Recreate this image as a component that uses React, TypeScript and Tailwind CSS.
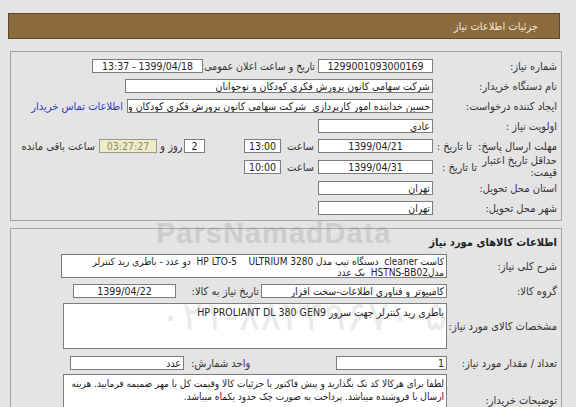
import React from "react";

function Field({
  w,
  h = "h-[14px]",
  align = "text-right",
  children,
  extra = "",
}: {
  w: string;
  h?: string;
  align?: string;
  children?: React.ReactNode;
  extra?: string;
}) {
  return (
    <div
      className={`${w} ${h} ${align} ${extra} shrink-0 overflow-hidden whitespace-nowrap border border-[#7c7c7c] bg-white px-[2px] text-[10.5px] leading-[12px] text-[#222]`}
    >
      {children}
    </div>
  );
}

export default function App() {
  return (
    <div
      dir="rtl"
      className="relative h-[407px] w-[576px] overflow-hidden bg-[#e4e4e4] font-['DejaVu_Sans_Condensed','DejaVu_Sans',sans-serif] text-[11px] leading-none text-[#333]"
    >
      <div className="pt-[13px]">
        {/* header */}
        <div className="mr-[16px] ml-[8px] flex h-[26px] items-center border border-[#5f4a2c] bg-[#8b6a3e] pr-[21px] text-[11px] text-[#f1e8d6]">
          جزئیات اطلاعات نیاز
        </div>

        {/* box 1 */}
        <div className="mt-[12px] mr-[14px] ml-[10px] border border-[#a6a6a6] pt-[4px] pr-[4px] pb-[2px]">
          <div className="flex h-[20px] items-center">
            <div className="w-[124px] shrink-0">شماره نیاز:</div>
            <Field w="w-[115px]" align="text-center">1299001093000169</Field>
            <div className="w-[115px] shrink-0 whitespace-nowrap pr-[3px] text-[10.5px]">تاریخ و ساعت اعلان عمومی:</div>
            <Field w="w-[111px]" align="text-center">1399/04/18 - 13:37</Field>
          </div>
          <div className="flex h-[20px] items-center">
            <div className="w-[124px] shrink-0">نام دستگاه خریدار:</div>
            <Field w="w-[308px]">شرکت سهامی کانون پرورش فکری کودکان و نوجوانان</Field>
          </div>
          <div className="flex h-[20px] items-center">
            <div className="w-[124px] shrink-0">ایجاد کننده درخواست:</div>
            <Field w="w-[306px]">
              حسین خدابنده امور کارپردازی&nbsp; شرکت سهامی کانون پرورش فکری کودکان و نوجوانان
            </Field>
            <div className="mr-[4px] whitespace-nowrap text-[#2f3cb4]">اطلاعات تماس خریدار</div>
          </div>
          <div className="flex h-[20px] items-center">
            <div className="w-[124px] shrink-0">اولویت نیاز :</div>
            <Field w="w-[115px]">عادی</Field>
          </div>
          <div className="flex h-[20px] items-center">
            <div className="w-[124px] shrink-0 whitespace-nowrap">مهلت ارسال پاسخ:&nbsp; تا تاریخ :</div>
            <Field w="w-[115px]" align="text-center">1399/04/21</Field>
            <div className="w-[37px] shrink-0 pr-[4px]">ساعت</div>
            <Field w="w-[37px]" align="text-center">13:00</Field>
            <div className="w-[39px] shrink-0" />
            <Field w="w-[21px]" align="text-center">2</Field>
            <div className="w-[25px] shrink-0 text-center">روز و</div>
            <div className="mr-[2px] h-[14px] w-[58px] shrink-0 border border-[#9a9a8a] bg-[#efedc9] text-center text-[10.5px] leading-[12px] text-[#8d8a66]">
              03:27:27
            </div>
            <div className="mr-[4px] whitespace-nowrap">ساعت باقی مانده</div>
          </div>
          <div className="flex h-[22px] items-center">
            <div className="flex w-[124px] shrink-0 items-center">
              <div className="w-[80px] whitespace-nowrap leading-[12px]">
                حداقل تاریخ اعتبار
                <br />
                قیمت:
              </div>
              <div className="whitespace-nowrap">تا تاریخ :</div>
            </div>
            <Field w="w-[115px]" align="text-center">1399/04/31</Field>
            <div className="w-[37px] shrink-0 pr-[4px]">ساعت</div>
            <Field w="w-[37px]" align="text-center">10:00</Field>
          </div>
          <div className="flex h-[20px] items-center">
            <div className="w-[124px] shrink-0">استان محل تحویل:</div>
            <Field w="w-[115px]">تهران</Field>
          </div>
          <div className="flex h-[20px] items-center">
            <div className="w-[124px] shrink-0">شهر محل تحویل:</div>
            <Field w="w-[115px]">تهران</Field>
          </div>
        </div>

        {/* box 2 */}
        <div className="mt-[7px] mr-[14px] ml-[10px] h-[200px] border border-[#a6a6a6] pt-[6px] pr-[4px]">
          <div className="flex h-[14px] items-center font-bold text-[#222]">اطلاعات کالاهای مورد نیاز</div>
          <div className="mt-[5px] flex items-center">
            <div className="w-[110px] shrink-0">شرح کلی نیاز:</div>
            <div className="h-[24px] w-[386px] shrink-0 overflow-hidden whitespace-nowrap border border-[#7c7c7c] bg-white px-[2px] pt-[1px] text-[10px] leading-[11px] text-[#222]">
              کاست cleaner&nbsp; دستگاه تیپ مدل HP LTO-5&nbsp;&nbsp;&nbsp; ULTRIUM 3280&nbsp; دو عدد - باطری رید کنترلر
              <br />
              مدلHSTNS-BB02&nbsp; یک عدد
            </div>
          </div>
          <div className="mt-[6px] flex h-[14px] items-center">
            <div className="w-[110px] shrink-0">گروه کالا:</div>
            <Field w="w-[186px]">کامپیوتر و فناوری اطلاعات-سخت افزار</Field>
            <div className="w-[85px] shrink-0 whitespace-nowrap pr-[2px]">تاریخ نیاز به کالا:</div>
            <Field w="w-[103px]" align="text-center">1399/04/22</Field>
          </div>
          <div className="mt-[5px] flex items-center">
            <div className="w-[110px] shrink-0 whitespace-nowrap">مشخصات کالای مورد نیاز:</div>
            <div className="h-[46px] w-[384px] shrink-0 overflow-hidden border border-[#7c7c7c] bg-white px-[2px] pt-[2px] text-[10.5px] leading-[12px] text-[#222]">
              باطری رید کنترلر جهت سرور HP PROLIANT DL 380 GEN9
            </div>
          </div>
          <div className="mt-[7px] flex h-[14px] items-center">
            <div className="w-[110px] shrink-0 whitespace-nowrap">تعداد / مقدار مورد نیاز:</div>
            <Field w="w-[111px]">1</Field>
            <div className="w-[145px] shrink-0 text-left">واحد شمارش:</div>
            <Field w="w-[114px]" extra="mr-[7px]">عدد</Field>
          </div>
          <div className="mt-[4px] flex items-center">
            <div className="w-[110px] shrink-0">توضیحات خریدار:</div>
            <div className="h-[52px] w-[384px] shrink-0 overflow-hidden whitespace-nowrap border border-[#7c7c7c] bg-white px-[2px] pt-[2px] text-[10px] leading-[13px] text-[#222]">
              لطفا برای هرکالا کد تک نگذارید و پیش فاکتور با جزئیات کالا وقیمت کل با مهر ضمیمه فرمایید. هزینه
              <br />
              ارسال با فروشنده میباشد. پرداخت به صورت چک حدود یکماه میباشد.
            </div>
          </div>
        </div>
      </div>

      {/* watermark overlay */}
      <div
        dir="ltr"
        className="pointer-events-none absolute top-[219px] left-[156px] font-['Liberation_Sans',sans-serif] text-[29px] font-bold tracking-[1px] text-[#9a9a9a] opacity-30"
      >
        ParsNamadData
      </div>
      <div
        dir="ltr"
        className="pointer-events-none absolute top-[296px] left-[160px] font-['DejaVu_Sans',sans-serif] text-[40px] text-[#9a9a9a] opacity-20"
      >
        ۰۲۱-۸۸۳۴۹۶۷۰-۵
      </div>
    </div>
  );
}
